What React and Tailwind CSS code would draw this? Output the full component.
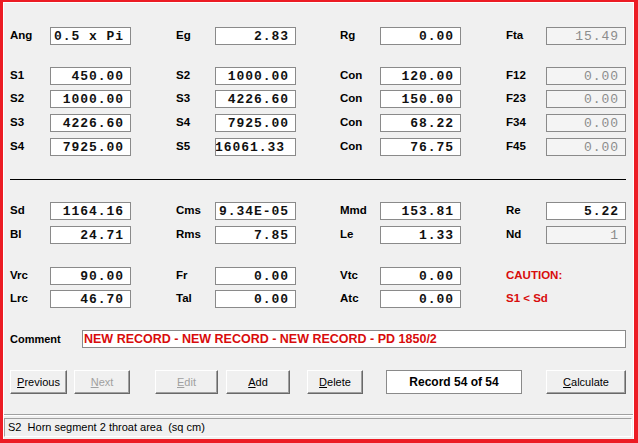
import React from "react";

const sans = "font-['Liberation_Sans',Arial,sans-serif]";
const mono = "font-['Liberation_Mono','Courier_New',monospace]";

// column label widths (col 2 is one pixel narrower in the original dialog)
const labelW = ["w-[40px]", "w-[39px]", "w-[40px]", "w-[40px]"];
const boxW = ["w-[81px]", "w-[81px]", "w-[81px]", "w-[80px]"];

function Box({ value, col, disabled, left, scrolled }) {
  const tone = disabled
    ? "bg-[#f4f4f4] text-[#8c8c8c] font-normal"
    : "bg-white text-[#111] font-bold";
  const place = left
    ? "justify-start pl-[3px]"
    : scrolled
      ? "justify-end pr-[10px]"
      : "justify-end pr-[6px]";
  return (
    <div
      className={`${boxW[col]} h-[18px] flex items-center overflow-hidden border border-[#8a8a8a] ${tone} ${place}`}
    >
      <span
        className={`${mono} text-[13px] leading-[15px] tracking-[0.95px] whitespace-pre shrink-0`}
      >
        {value}
      </span>
    </div>
  );
}

function Field({ cell, col }) {
  if (!cell) return <div />;
  if (cell.warn) {
    return (
      <div className="flex items-center h-[18px]">
        <span className="text-[11.5px] font-bold text-[#d80c0c]">{cell.warn}</span>
      </div>
    );
  }
  return (
    <div className="flex items-center h-[18px]">
      <span className={`${labelW[col]} text-[11.5px] font-bold text-black`}>
        {cell.label}
      </span>
      <Box {...cell} col={col} />
    </div>
  );
}

function Row({ cells, className }) {
  return (
    <div className={`grid grid-cols-[166px_164px_166px_120px] ${className}`}>
      {cells.map((c, i) => (
        <Field key={i} cell={c} col={i} />
      ))}
    </div>
  );
}

function Button({ first, rest, w, disabled, className = "" }) {
  return (
    <div
      className={`${w} h-[24px] flex items-center justify-center bg-[#f0f0f0] border-t border-l border-t-white border-l-white border-b border-r border-b-[#696969] border-r-[#696969] shadow-[inset_-1px_-1px_0_#a0a0a0] text-[11px] ${
        disabled ? "text-[#a0a0a0]" : "text-black"
      } ${className}`}
    >
      <span>
        <span className="underline">{first}</span>
        {rest}
      </span>
    </div>
  );
}

const top = [
  { label: "Ang", value: "0.5 x Pi", left: true },
  { label: "Eg", value: "2.83" },
  { label: "Rg", value: "0.00" },
  { label: "Fta", value: "15.49", disabled: true },
];

const segs = [
  [
    { label: "S1", value: "450.00" },
    { label: "S2", value: "1000.00" },
    { label: "Con", value: "120.00" },
    { label: "F12", value: "0.00", disabled: true },
  ],
  [
    { label: "S2", value: "1000.00" },
    { label: "S3", value: "4226.60" },
    { label: "Con", value: "150.00" },
    { label: "F23", value: "0.00", disabled: true },
  ],
  [
    { label: "S3", value: "4226.60" },
    { label: "S4", value: "7925.00" },
    { label: "Con", value: "68.22" },
    { label: "F34", value: "0.00", disabled: true },
  ],
  [
    { label: "S4", value: "7925.00" },
    { label: "S5", value: "16061.33", scrolled: true },
    { label: "Con", value: "76.75" },
    { label: "F45", value: "0.00", disabled: true },
  ],
];

const driver = [
  [
    { label: "Sd", value: "1164.16" },
    { label: "Cms", value: "9.34E-05" },
    { label: "Mmd", value: "153.81" },
    { label: "Re", value: "5.22" },
  ],
  [
    { label: "Bl", value: "24.71" },
    { label: "Rms", value: "7.85" },
    { label: "Le", value: "1.33" },
    { label: "Nd", value: "1", disabled: true },
  ],
];

const chamber = [
  [
    { label: "Vrc", value: "90.00" },
    { label: "Fr", value: "0.00" },
    { label: "Vtc", value: "0.00" },
    { warn: "CAUTION:" },
  ],
  [
    { label: "Lrc", value: "46.70" },
    { label: "Tal", value: "0.00" },
    { label: "Atc", value: "0.00" },
    { warn: "S1 < Sd" },
  ],
];

export default function App() {
  return (
    <div
      className={`${sans} w-[638px] h-[443px] border-t-2 border-l-[3px] border-r-4 border-b-4 border-[#ec1c24] bg-[#ec1c24] overflow-hidden`}
    >
      <div className="h-full flex flex-col bg-[#f0f0f0] border-t border-l border-r border-white">
        <div className="flex flex-col pl-[6px]">
          <Row cells={top} className="mt-[24px]" />
          <Row cells={segs[0]} className="mt-[22px]" />
          <Row cells={segs[1]} className="mt-[5px]" />
          <Row cells={segs[2]} className="mt-[6px]" />
          <Row cells={segs[3]} className="mt-[6px]" />

          <div className="mt-[23px] w-[616px] h-px bg-black" />

          <Row cells={driver[0]} className="mt-[22px]" />
          <Row cells={driver[1]} className="mt-[6px]" />
          <Row cells={chamber[0]} className="mt-[23px]" />
          <Row cells={chamber[1]} className="mt-[5px]" />

          <div className="mt-[22px] flex items-center h-[18px]">
            <span className="w-[72px] text-[11px] font-bold text-black">Comment</span>
            <div className="w-[544px] h-[18px] flex items-center bg-white border border-[#8a8a8a] pl-[1px]">
              <span className="text-[12.5px] font-bold text-[#d80c0c] whitespace-pre">
                NEW RECORD - NEW RECORD - NEW RECORD - PD 1850/2
              </span>
            </div>
          </div>

          <div className="mt-[22px] flex items-center">
            <Button w="w-[57px]" first="P" rest="revious" />
            <Button w="w-[56px]" first="N" rest="ext" disabled className="ml-[7px]" />
            <Button w="w-[63px]" first="E" rest="dit" disabled className="ml-[25px]" />
            <Button w="w-[64px]" first="A" rest="dd" className="ml-[8px]" />
            <Button w="w-[56px]" first="D" rest="elete" className="ml-[17px]" />
            <div className="ml-[23px] w-[136px] h-[24px] flex items-center justify-center bg-white border border-[#8a8a8a]">
              <span className="text-[12px] font-bold text-black">Record 54 of 54</span>
            </div>
            <Button w="w-[80px]" first="C" rest="alculate" className="ml-[24px]" />
          </div>
        </div>

        <div className="mt-[20px] h-px bg-[#a0a0a0]" />
        <div className="h-px bg-white" />
        <div className="mt-[2px] h-[19px] flex items-center border-t border-l border-[#a0a0a0] border-b-white border-r-white border-b border-r pl-[3px] mr-[1px]">
          <span className="text-[11px] text-black whitespace-pre">
            S2  Horn segment 2 throat area  (sq cm)
          </span>
        </div>
      </div>
    </div>
  );
}
